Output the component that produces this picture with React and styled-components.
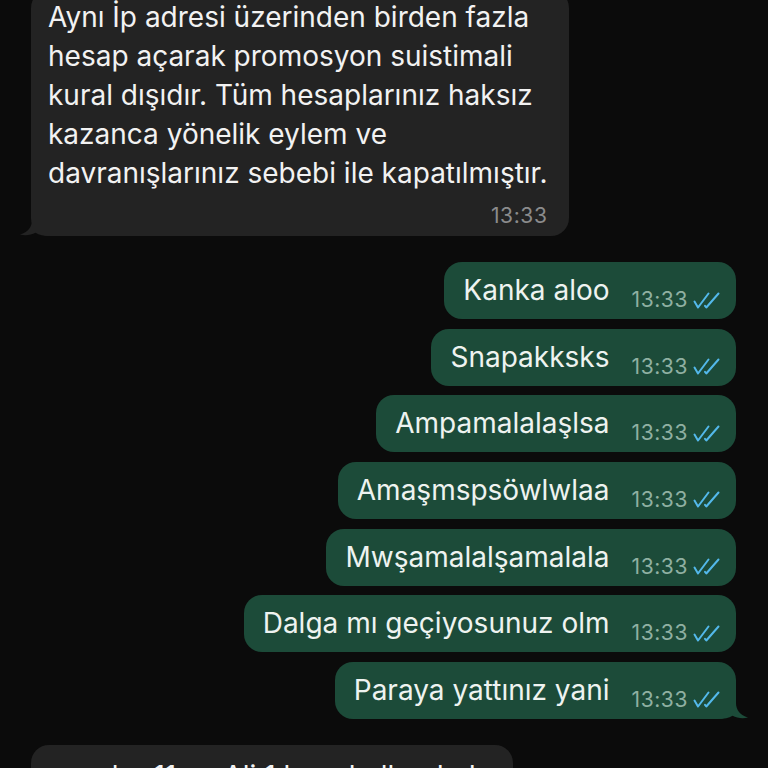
import React from "react";
import styled, { createGlobalStyle } from "styled-components";

const Global = createGlobalStyle`
  html, body { margin: 0; padding: 0; background: #0b0b0b; }
  body { overflow: hidden; font-family: Inter, "Noto Sans", "Liberation Sans", sans-serif; }
`;

const Screen = styled.div`
  width: 768px;
  height: 768px;
  overflow: hidden;
  background: #0b0b0b;
`;

const Thread = styled.div`
  display: flex;
  flex-direction: column;
  padding: 0 32px 0 31px;
  margin-top: -10px;
`;

const InBubble = styled.div`
  position: relative;
  align-self: flex-start;
  background: #232323;
  color: #f2f2f2;
  border-radius: 18px;
  padding: ${(p) => p.$pt || 8}px 22px 10px 17px;
  margin-top: ${(p) => p.$mt || 0}px;
  font-size: 28px;
`;

const Line = styled.span`
  display: block;
  line-height: 39px;
  white-space: nowrap;
`;

const InMeta = styled.div`
  text-align: right;
  font-size: 21px;
  letter-spacing: 0.6px;
  line-height: 20px;
  margin-top: 13px;
  color: #8b8b8c;
`;

const OutGroup = styled.div`
  display: flex;
  flex-direction: column;
  align-items: flex-end;
  gap: 9.67px;
  margin-top: 26px;
`;

const OutBubble = styled.div`
  position: relative;
  display: flex;
  align-items: flex-end;
  box-sizing: border-box;
  height: 57px;
  background: #1c4b39;
  color: #eef3f0;
  border-radius: 18px;
  padding: 9px 16px 9px 19px;
  font-size: 28px;
`;

const OutText = styled.span`
  line-height: 39px;
  white-space: nowrap;
`;

const OutMeta = styled.span`
  display: flex;
  align-items: center;
  gap: 5px;
  margin-left: 22px;
  font-size: 21px;
  letter-spacing: 0.6px;
  line-height: 20px;
  color: #8fb0a2;
`;

const Tail = styled.svg`
  position: absolute;
  bottom: 0;
  width: 30px;
  height: 24px;
  ${(p) => (p.$side === "left" ? "left: -11px; transform: scaleX(-1);" : "right: -12px;")}
`;

const TailShape = ({ side, color }) => (
  <Tail $side={side} viewBox="0 0 30 24">
    <path
      d="M0 0 H18 V8 C18 15 22 20 30 22.5 C25 24 19 23.2 14.5 20.8 C11 23 6 24 0 24 Z"
      fill={color}
    />
  </Tail>
);

const Ticks = () => (
  <svg width="27" height="17" viewBox="0 0 27 17" fill="none">
    <path
      d="M1.5 9.5 L5 15.5 L15.5 1.5"
      stroke="#53b8ea"
      strokeWidth="2"
      strokeLinecap="round"
      strokeLinejoin="round"
    />
    <path
      d="M12 13.8 L13.3 15.5 L25.5 1.5"
      stroke="#53b8ea"
      strokeWidth="2"
      strokeLinecap="round"
      strokeLinejoin="round"
    />
  </svg>
);

const incomingLines = [
  "Aynı İp adresi üzerinden birden fazla",
  "hesap açarak promosyon suistimali",
  "kural dışıdır. Tüm hesaplarınız haksız",
  "kazanca yönelik eylem ve",
  "davranışlarınız sebebi ile kapatılmıştır.",
];

const outgoing = [
  "Kanka aloo",
  "Snapakksks",
  "Ampamalalaşlsa",
  "Amaşmspsöwlwlaa",
  "Mwşamalalşamalala",
  "Dalga mı geçiyosunuz olm",
  "Paraya yattınız yani",
];

export default function App() {
  return (
    <Screen>
      <Global />
      <Thread>
        <InBubble>
          {incomingLines.map((l) => (
            <Line key={l}>{l}</Line>
          ))}
          <InMeta>13:33</InMeta>
          <TailShape side="left" color="#232323" />
        </InBubble>

        <OutGroup>
          {outgoing.map((m, i) => (
            <OutBubble key={m}>
              <OutText>{m}</OutText>
              <OutMeta>
                13:33
                <Ticks />
              </OutMeta>
              {i === outgoing.length - 1 && <TailShape side="right" color="#1c4b39" />}
            </OutBubble>
          ))}
        </OutGroup>

        <InBubble $mt={26} $pt={12}>
          <Line>ama bu 11 ve Ali 1 kere kullandı da</Line>
          <InMeta>13:34</InMeta>
        </InBubble>
      </Thread>
    </Screen>
  );
}
